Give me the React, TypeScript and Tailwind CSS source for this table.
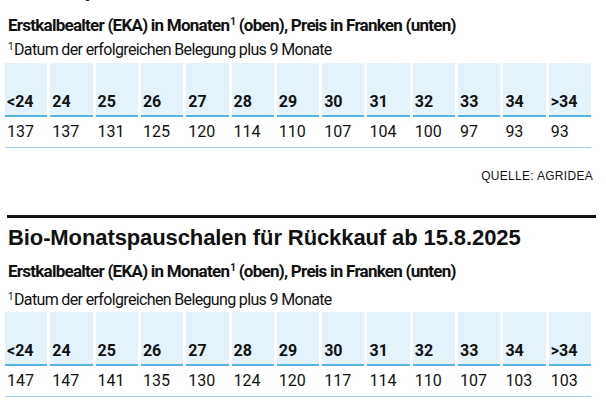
const cols = ["<24", "24", "25", "26", "27", "28", "29", "30", "31", "32", "33", "34", ">34"];

const Subtitle = ({ className }: { className: string }) => (
  <div className={`font-bold text-[17px] leading-[20px] tracking-[-0.75px] ${className}`}>
    Erstkalbealter (EKA) in Monaten<sup className="text-[10px] top-[-6px] ml-[1px]">1</sup> (oben), Preis in Franken (unten)
  </div>
);

const Footnote = ({ className }: { className: string }) => (
  <div className={`text-[16px] leading-[20px] tracking-[-0.65px] ${className}`}>
    <sup className="text-[10px] top-[-5px] mr-[1px]">1</sup>Datum der erfolgreichen Belegung plus 9 Monate
  </div>
);

const PriceTable = ({ prices, className }: { prices: number[]; className: string }) => (
  <div className={`w-[586px] ${className}`}>
    <div className="grid grid-cols-13 gap-x-[3px]">
      {cols.map((c) => (
        <div key={c} className="h-[54px] bg-[#e4f2fb] border-b-2 border-[#56b3e4] flex items-end pl-[2px] pb-[3px] font-bold text-[16px] leading-[20px]">
          {c}
        </div>
      ))}
    </div>
    <div className="grid grid-cols-13 gap-x-[3px] border-b border-[#9fd3ef] pt-[5px] pb-[5px]">
      {prices.map((p, i) => (
        <div key={i} className="pl-[2px] text-[16px] leading-[20px]">
          {p}
        </div>
      ))}
    </div>
  </div>
);

export default function App() {
  return (
    <div className="w-[606px] h-[402px] overflow-hidden bg-white text-[#111] font-['Roboto',sans-serif]">
      <div className="px-[5px]">
        <h2 className="mt-[-23px] pl-[3px] font-['Liberation_Sans',Arial,sans-serif] font-bold text-[22px] leading-[24px] tracking-[-0.1px] whitespace-nowrap">
          Monatspauschalen für Rückkauf ab 15.8.2025
        </h2>
        <Subtitle className="mt-[14px] pl-[3px]" />
        <Footnote className="mt-[5px] pl-[3px]" />
        <PriceTable className="mt-[3px]" prices={[137, 137, 131, 125, 120, 114, 110, 107, 104, 100, 97, 93, 93]} />
        <div className="w-[588px] mt-[20px] text-right font-['Liberation_Sans',Arial,sans-serif] text-[12px] leading-[16px] tracking-[0.3px]">
          QUELLE: AGRIDEA
        </div>
        <div className="mt-[31px] ml-[2px] w-[589px] h-[3px] bg-[#111]" />
        <h2 className="mt-[8px] pl-[3px] font-['Liberation_Sans',Arial,sans-serif] font-bold text-[22px] leading-[24px] tracking-[-0.1px] whitespace-nowrap">
          Bio-Monatspauschalen für Rückkauf ab 15.8.2025
        </h2>
        <Subtitle className="mt-[11px] pl-[3px]" />
        <Footnote className="mt-[9px] pl-[3px]" />
        <PriceTable className="mt-[2px]" prices={[147, 147, 141, 135, 130, 124, 120, 117, 114, 110, 107, 103, 103]} />
      </div>
    </div>
  );
}
